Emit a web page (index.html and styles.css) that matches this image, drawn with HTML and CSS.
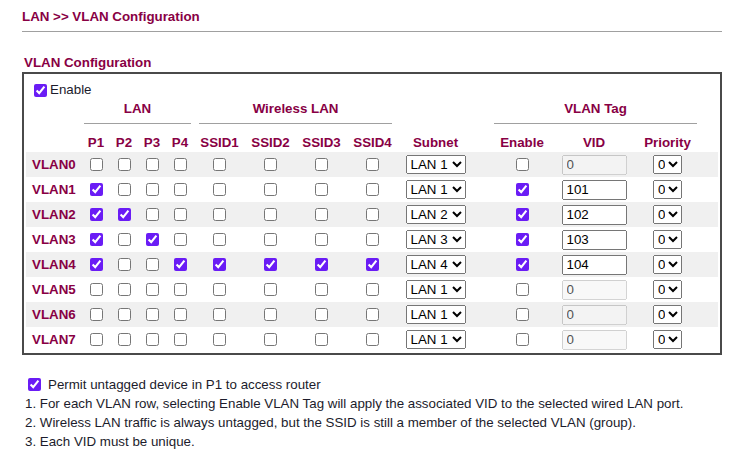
FILE: index.html
```html
<!DOCTYPE html>
<html>
<head>
<meta charset="utf-8">
<link rel="stylesheet" href="styles.css">
</head>
<body>
<div class="page">
  <h1 class="title">LAN &gt;&gt; VLAN Configuration</h1>
  <hr class="rule">
  <h2 class="section">VLAN Configuration</h2>
  <div class="box">
    <label class="enable"><input type="checkbox" checked><span>Enable</span></label>
    <table class="vlan">
      <colgroup>
        <col class="c-label"><col class="c-port"><col class="c-port"><col class="c-port"><col class="c-port">
        <col class="c-ssid"><col class="c-ssid"><col class="c-ssid"><col class="c-ssid">
        <col class="c-subnet"><col class="c-gap"><col class="c-en"><col class="c-vid"><col class="c-pri"><col class="c-gap">
      </colgroup>
      <tr class="groups">
        <th></th>
        <th colspan="4"><div class="grp grp-lan">LAN</div></th>
        <th colspan="4"><div class="grp grp-wl">Wireless LAN</div></th>
        <th></th><th></th>
        <th colspan="3"><div class="grp grp-tag">VLAN Tag</div></th>
        <th></th>
      </tr>
      <tr class="heads">
        <th></th><th>P1</th><th>P2</th><th>P3</th><th>P4</th>
        <th>SSID1</th><th>SSID2</th><th>SSID3</th><th>SSID4</th>
        <th>Subnet</th><th></th><th>Enable</th><th>VID</th><th>Priority</th><th></th>
      </tr>
      <tr class="row shade">
        <td class="lbl">VLAN0</td>
        <td><input type="checkbox"></td><td><input type="checkbox"></td><td><input type="checkbox"></td><td><input type="checkbox"></td>
        <td><input type="checkbox"></td><td><input type="checkbox"></td><td><input type="checkbox"></td><td><input type="checkbox"></td>
        <td><select class="sel-lan"><option selected>LAN 1</option><option>LAN 2</option><option>LAN 3</option><option>LAN 4</option></select></td><td></td>
        <td><input type="checkbox"></td>
        <td><input type="text" class="vid" value="0" disabled></td>
        <td><select class="sel-pri"><option>0</option><option>1</option><option>2</option><option>3</option><option>4</option><option>5</option><option>6</option><option>7</option></select></td><td></td>
      </tr>
      <tr class="row">
        <td class="lbl">VLAN1</td>
        <td><input type="checkbox" checked></td><td><input type="checkbox"></td><td><input type="checkbox"></td><td><input type="checkbox"></td>
        <td><input type="checkbox"></td><td><input type="checkbox"></td><td><input type="checkbox"></td><td><input type="checkbox"></td>
        <td><select class="sel-lan"><option selected>LAN 1</option><option>LAN 2</option><option>LAN 3</option><option>LAN 4</option></select></td><td></td>
        <td><input type="checkbox" checked></td>
        <td><input type="text" class="vid" value="101"></td>
        <td><select class="sel-pri"><option>0</option><option>1</option><option>2</option><option>3</option><option>4</option><option>5</option><option>6</option><option>7</option></select></td><td></td>
      </tr>
      <tr class="row shade">
        <td class="lbl">VLAN2</td>
        <td><input type="checkbox" checked></td><td><input type="checkbox" checked></td><td><input type="checkbox"></td><td><input type="checkbox"></td>
        <td><input type="checkbox"></td><td><input type="checkbox"></td><td><input type="checkbox"></td><td><input type="checkbox"></td>
        <td><select class="sel-lan"><option>LAN 1</option><option selected>LAN 2</option><option>LAN 3</option><option>LAN 4</option></select></td><td></td>
        <td><input type="checkbox" checked></td>
        <td><input type="text" class="vid" value="102"></td>
        <td><select class="sel-pri"><option>0</option><option>1</option><option>2</option><option>3</option><option>4</option><option>5</option><option>6</option><option>7</option></select></td><td></td>
      </tr>
      <tr class="row">
        <td class="lbl">VLAN3</td>
        <td><input type="checkbox" checked></td><td><input type="checkbox"></td><td><input type="checkbox" checked></td><td><input type="checkbox"></td>
        <td><input type="checkbox"></td><td><input type="checkbox"></td><td><input type="checkbox"></td><td><input type="checkbox"></td>
        <td><select class="sel-lan"><option>LAN 1</option><option>LAN 2</option><option selected>LAN 3</option><option>LAN 4</option></select></td><td></td>
        <td><input type="checkbox" checked></td>
        <td><input type="text" class="vid" value="103"></td>
        <td><select class="sel-pri"><option>0</option><option>1</option><option>2</option><option>3</option><option>4</option><option>5</option><option>6</option><option>7</option></select></td><td></td>
      </tr>
      <tr class="row shade">
        <td class="lbl">VLAN4</td>
        <td><input type="checkbox" checked></td><td><input type="checkbox"></td><td><input type="checkbox"></td><td><input type="checkbox" checked></td>
        <td><input type="checkbox" checked></td><td><input type="checkbox" checked></td><td><input type="checkbox" checked></td><td><input type="checkbox" checked></td>
        <td><select class="sel-lan"><option>LAN 1</option><option>LAN 2</option><option>LAN 3</option><option selected>LAN 4</option></select></td><td></td>
        <td><input type="checkbox" checked></td>
        <td><input type="text" class="vid" value="104"></td>
        <td><select class="sel-pri"><option>0</option><option>1</option><option>2</option><option>3</option><option>4</option><option>5</option><option>6</option><option>7</option></select></td><td></td>
      </tr>
      <tr class="row">
        <td class="lbl">VLAN5</td>
        <td><input type="checkbox"></td><td><input type="checkbox"></td><td><input type="checkbox"></td><td><input type="checkbox"></td>
        <td><input type="checkbox"></td><td><input type="checkbox"></td><td><input type="checkbox"></td><td><input type="checkbox"></td>
        <td><select class="sel-lan"><option selected>LAN 1</option><option>LAN 2</option><option>LAN 3</option><option>LAN 4</option></select></td><td></td>
        <td><input type="checkbox"></td>
        <td><input type="text" class="vid" value="0" disabled></td>
        <td><select class="sel-pri"><option>0</option><option>1</option><option>2</option><option>3</option><option>4</option><option>5</option><option>6</option><option>7</option></select></td><td></td>
      </tr>
      <tr class="row shade">
        <td class="lbl">VLAN6</td>
        <td><input type="checkbox"></td><td><input type="checkbox"></td><td><input type="checkbox"></td><td><input type="checkbox"></td>
        <td><input type="checkbox"></td><td><input type="checkbox"></td><td><input type="checkbox"></td><td><input type="checkbox"></td>
        <td><select class="sel-lan"><option selected>LAN 1</option><option>LAN 2</option><option>LAN 3</option><option>LAN 4</option></select></td><td></td>
        <td><input type="checkbox"></td>
        <td><input type="text" class="vid" value="0" disabled></td>
        <td><select class="sel-pri"><option>0</option><option>1</option><option>2</option><option>3</option><option>4</option><option>5</option><option>6</option><option>7</option></select></td><td></td>
      </tr>
      <tr class="row">
        <td class="lbl">VLAN7</td>
        <td><input type="checkbox"></td><td><input type="checkbox"></td><td><input type="checkbox"></td><td><input type="checkbox"></td>
        <td><input type="checkbox"></td><td><input type="checkbox"></td><td><input type="checkbox"></td><td><input type="checkbox"></td>
        <td><select class="sel-lan"><option selected>LAN 1</option><option>LAN 2</option><option>LAN 3</option><option>LAN 4</option></select></td><td></td>
        <td><input type="checkbox"></td>
        <td><input type="text" class="vid" value="0" disabled></td>
        <td><select class="sel-pri"><option>0</option><option>1</option><option>2</option><option>3</option><option>4</option><option>5</option><option>6</option><option>7</option></select></td><td></td>
      </tr>
    </table>
  </div>
  <div class="notes">
    <label class="permit"><input type="checkbox" checked><span>Permit untagged device in P1 to access router</span></label>
    <p class="note">1. For each VLAN row, selecting Enable VLAN Tag will apply the associated VID to the selected wired LAN port.</p>
    <p class="note">2. Wireless LAN traffic is always untagged, but the SSID is still a member of the selected VLAN (group).</p>
    <p class="note">3. Each VID must be unique.</p>
  </div>
</div>
</body>
</html>
```
FILE: styles.css
```css
html, body {
  margin: 0;
  padding: 0;
  background: #ffffff;
}
body {
  font-family: "Liberation Sans", Arial, sans-serif;
  font-size: 13.333px;
  color: #1c1c2c;
}
.page {
  width: 700px;
  margin-left: 22px;
}
.title {
  margin: 9px 0 0 0;
  font-size: 13.333px;
  line-height: 16px;
  font-weight: bold;
  color: #880044;
}
.rule {
  margin: 6px 0 0 0;
  border: 0;
  height: 1px;
  background: #a0a0a0;
}
.section {
  margin: 23px 0 1px 2px;
  font-size: 13.333px;
  line-height: 16px;
  font-weight: bold;
  color: #880044;
}
.box {
  border: 2px solid #4a4a4a;
  padding: 0 2px 1px 2px;
}
input[type="checkbox"] {
  margin: 0;
  width: 13px;
  height: 13px;
  accent-color: #6a1cf5;
  vertical-align: middle;
}
.enable {
  display: flex;
  align-items: center;
  gap: 3px;
  height: 16px;
  padding: 8px 0 2px 8px;
  line-height: 16px;
}
.vlan {
  width: 692px;
  table-layout: fixed;
  border-collapse: collapse;
  border-spacing: 0;
  font-size: 13.333px;
}
.c-label { width: 56px; }
.c-port { width: 28px; }
.c-ssid { width: 51px; }
.c-subnet { width: 75px; }
.c-gap { width: 21px; }
.c-en { width: 56px; }
.c-vid { width: 88px; }
.c-pri { width: 59px; }
.vlan th, .vlan td {
  padding: 0;
  text-align: center;
  line-height: 16px;
}
.vlan th {
  font-weight: bold;
  color: #880044;
}
.groups th {
  height: 24px;
  vertical-align: top;
}
.grp {
  line-height: 16px;
  padding-top: 1px;
  padding-bottom: 6px;
  border-bottom: 1px solid #a0a0a0;
}
.grp-lan { margin: 0 3px 0 2px; }
.grp-wl { margin: 0 6px 0 5px; }
.grp-tag { margin: 0; }
.heads th {
  height: 28px;
  vertical-align: bottom;
  padding-bottom: 1px;
  box-sizing: border-box;
}
.row td {
  height: 25px;
  vertical-align: middle;
}
.shade td {
  background: #f0f0f0;
}
.vlan td.lbl {
  text-align: left;
  padding-left: 6px;
  font-weight: bold;
  color: #880044;
}
select {
  font-family: "Liberation Sans", Arial, sans-serif;
  font-size: 13.333px;
  color: #000000;
  vertical-align: middle;
}
.sel-lan {
  width: 60px;
  height: 19px;
}
.sel-pri {
  width: 29px;
  height: 19px;
}
.vid {
  box-sizing: border-box;
  width: 65px;
  height: 20px;
  font-family: "Liberation Sans", Arial, sans-serif;
  font-size: 13.333px;
  padding: 1px 3px;
  margin: 0;
  vertical-align: middle;
}
.notes {
  margin-top: 20px;
}
.permit {
  display: flex;
  align-items: center;
  gap: 7px;
  height: 19px;
  line-height: 19px;
  padding-left: 6px;
}
.note {
  margin: 0;
  padding-left: 3px;
  line-height: 19px;
}
```
